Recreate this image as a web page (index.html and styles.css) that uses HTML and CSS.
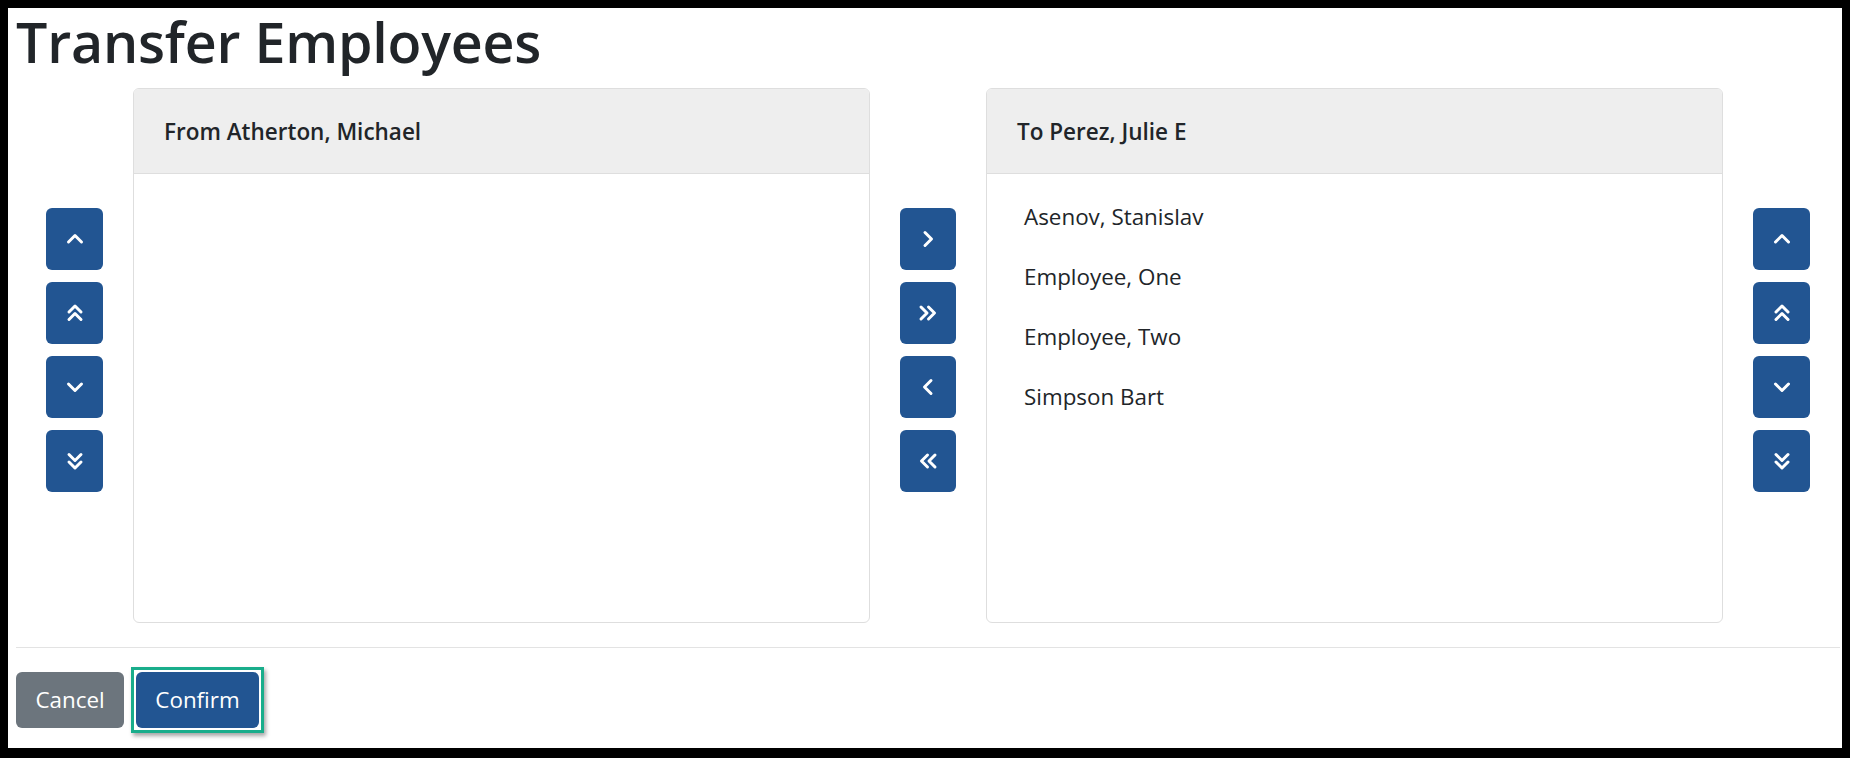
FILE: index.html
```html
<!DOCTYPE html>
<html lang="en">
<head>
<meta charset="utf-8">
<title>Transfer Employees</title>
<link rel="stylesheet" href="styles.css">
</head>
<body>
<div class="page">
  <h1 class="title">Transfer Employees</h1>

  <div class="transfer">
    <div class="btn-col">
      <button class="icon-btn" aria-label="Move up">
        <svg viewBox="0 0 20 20"><polyline points="3.5,13 10,6.5 16.5,13"/></svg>
      </button>
      <button class="icon-btn" aria-label="Move to top">
        <svg viewBox="0 0 20 20"><polyline points="4,9 10,3 16,9"/><polyline points="4,16.5 10,10.5 16,16.5"/></svg>
      </button>
      <button class="icon-btn" aria-label="Move down">
        <svg viewBox="0 0 20 20"><polyline points="3.5,7 10,13.5 16.5,7"/></svg>
      </button>
      <button class="icon-btn" aria-label="Move to bottom">
        <svg viewBox="0 0 20 20"><polyline points="4,3.5 10,9.5 16,3.5"/><polyline points="4,11 10,17 16,11"/></svg>
      </button>
    </div>

    <section class="card">
      <header class="card-header">From Atherton, Michael</header>
      <ul class="card-list"></ul>
    </section>

    <div class="btn-col btn-col-mid">
      <button class="icon-btn" aria-label="Move selected right">
        <svg viewBox="0 0 20 20"><polyline points="7,3.5 13.5,10 7,16.5"/></svg>
      </button>
      <button class="icon-btn" aria-label="Move all right">
        <svg viewBox="0 0 20 20"><polyline points="3,4 9,10 3,16"/><polyline points="10.5,4 16.5,10 10.5,16"/></svg>
      </button>
      <button class="icon-btn" aria-label="Move selected left">
        <svg viewBox="0 0 20 20"><polyline points="13,3.5 6.5,10 13,16.5"/></svg>
      </button>
      <button class="icon-btn" aria-label="Move all left">
        <svg viewBox="0 0 20 20"><polyline points="9.5,4 3.5,10 9.5,16"/><polyline points="17,4 11,10 17,16"/></svg>
      </button>
    </div>

    <section class="card">
      <header class="card-header">To Perez, Julie E</header>
      <ul class="card-list">
        <li>Asenov, Stanislav</li>
        <li>Employee, One</li>
        <li>Employee, Two</li>
        <li>Simpson Bart</li>
      </ul>
    </section>

    <div class="btn-col">
      <button class="icon-btn" aria-label="Move up">
        <svg viewBox="0 0 20 20"><polyline points="3.5,13 10,6.5 16.5,13"/></svg>
      </button>
      <button class="icon-btn" aria-label="Move to top">
        <svg viewBox="0 0 20 20"><polyline points="4,9 10,3 16,9"/><polyline points="4,16.5 10,10.5 16,16.5"/></svg>
      </button>
      <button class="icon-btn" aria-label="Move down">
        <svg viewBox="0 0 20 20"><polyline points="3.5,7 10,13.5 16.5,7"/></svg>
      </button>
      <button class="icon-btn" aria-label="Move to bottom">
        <svg viewBox="0 0 20 20"><polyline points="4,3.5 10,9.5 16,3.5"/><polyline points="4,11 10,17 16,11"/></svg>
      </button>
    </div>
  </div>

  <footer class="footer">
    <button class="btn btn-cancel">Cancel</button>
    <span class="highlight">
      <button class="btn btn-confirm">Confirm</button>
    </span>
  </footer>
</div>
</body>
</html>
```

FILE: styles.css
```css
html, body {
  margin: 0;
  background: #000;
}

body {
  padding: 8px 8px 10px 8px;
  box-sizing: border-box;
  height: 758px;
  font-family: "Open Sans", "Noto Sans", sans-serif;
  color: #212529;
}

.page {
  background: #fff;
  height: 740px;
  box-sizing: border-box;
  padding: 0 2px 0 8px;
  display: flex;
  flex-direction: column;
}

.title {
  margin: 0 0 12px 0;
  font-size: 55.5px;
  font-weight: 600;
  line-height: 68px;
  letter-spacing: -0.2px;
  color: #212529;
}

.transfer {
  display: grid;
  grid-template-columns: 117px 737px 116px 737px 117px;
  height: 535px;
}

.btn-col {
  display: flex;
  flex-direction: column;
  align-items: center;
  gap: 12px;
  padding-top: 120px;
}

.icon-btn {
  width: 57px;
  height: 62px;
  border: 0;
  border-radius: 6px;
  background: #225592;
  display: flex;
  align-items: center;
  justify-content: center;
  padding: 0;
}

.btn-col-mid .icon-btn {
  width: 56px;
}

.icon-btn svg {
  width: 20px;
  height: 20px;
  fill: none;
  stroke: #fff;
  stroke-width: 3;
  stroke-linecap: round;
  stroke-linejoin: round;
}

.card {
  border: 1px solid #dedede;
  border-radius: 6px;
  background: #fff;
  display: flex;
  flex-direction: column;
  overflow: hidden;
}

.card-header {
  background: #eeeeee;
  border-bottom: 1px solid #dedede;
  padding: 25px 30px 23px 30px;
  height: 36px;
  font-size: 22.5px;
  font-weight: 600;
  line-height: 36px;
}

.card-list {
  list-style: none;
  margin: 0;
  padding: 13px 0 0 0;
}

.card-list li {
  padding: 12px 37px;
  font-size: 22.4px;
  line-height: 36px;
}

.footer {
  margin-top: 24px;
  border-top: 1px solid #e3e3e3;
  padding-top: 19px;
  display: flex;
  align-items: center;
  gap: 7px;
}

.btn {
  height: 56px;
  border: 0;
  border-radius: 6px;
  color: #fff;
  font-family: "Open Sans", "Noto Sans", sans-serif;
  font-size: 22.4px;
  line-height: 36px;
  padding: 0;
}

.btn-cancel {
  width: 108px;
  background: #6c757d;
}

.btn-confirm {
  width: 123px;
  background: #225592;
  display: block;
}

.highlight {
  display: block;
  padding: 2px;
  border: 3px solid #19ad8b;
  box-shadow: 2px 3px 4px rgba(0, 0, 0, 0.35);
}
```
